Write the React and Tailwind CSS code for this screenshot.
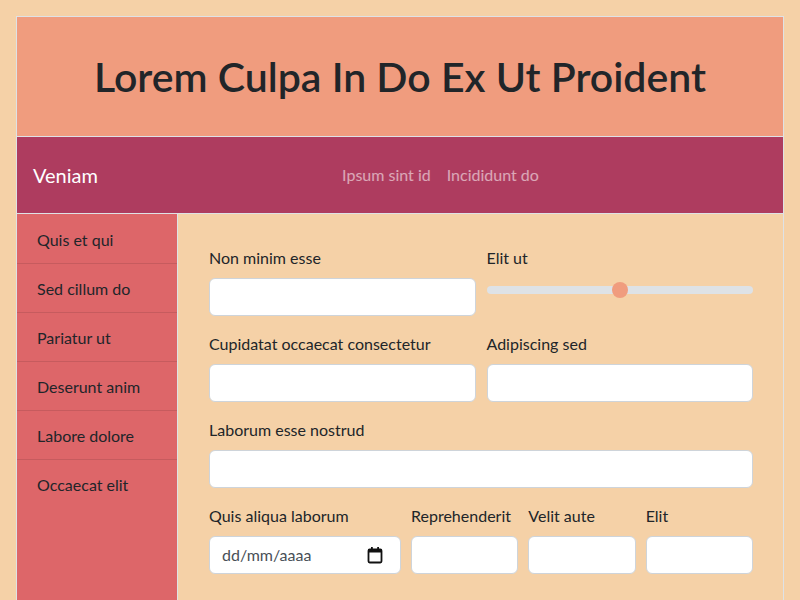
import React from "react";

const sideItems = [
  "Quis et qui",
  "Sed cillum do",
  "Pariatur ut",
  "Deserunt anim",
  "Labore dolore",
  "Occaecat elit",
];

const Field = ({ label, className = "" }) => (
  <div className={className}>
    <label className="block mb-2 leading-6">{label}</label>
    <input
      type="text"
      className="block w-full h-[38px] bg-white border border-[#ced4da] rounded-md px-3"
    />
  </div>
);

const App = () => {
  return (
    <div
      className="min-h-screen bg-[#f5d1a7] p-4 text-[#212529]"
      style={{ fontFamily: "Lato, 'Open Sans', sans-serif" }}
    >
      <div className="border border-[#dee2e6]">
        {/* Header */}
        <header className="h-[120px] bg-[#f09c7e] border-b border-[#dee2e6] flex items-center justify-center">
          <h1 className="text-[41px] font-semibold leading-tight">
            Lorem Culpa In Do Ex Ut Proident
          </h1>
        </header>

        {/* Nav */}
        <nav className="h-[77px] bg-[#ae3c5f] border-b border-[#dee2e6] flex items-center px-4">
          <span className="text-white text-xl mr-4">Veniam</span>
          <div className="flex-1 flex justify-center gap-4 text-white/55">
            <a>Ipsum sint id</a>
            <a>Incididunt do</a>
          </div>
        </nav>

        {/* Body */}
        <div className="flex">
          <aside className="w-[161px] shrink-0 bg-[#dd6669] border-r border-[#dee2e6] min-h-[420px] pt-px">
            {sideItems.map((item, i) => (
              <div
                key={item}
                className={`h-[49px] flex items-center px-5 pt-px ${
                  i < sideItems.length - 1 ? "border-b border-black/10" : ""
                }`}
              >
                {item}
              </div>
            ))}
          </aside>

          <main className="flex-1 pl-[31px] pr-[30px] pt-8 pb-8">
            <div className="grid grid-cols-2 gap-x-[11px]">
              <Field label="Non minim esse" />
              <div>
                <label className="block mb-2 leading-6">Elit ut</label>
                <div className="h-6 flex items-center">
                  <div className="relative w-full h-2 rounded-full bg-[#dee2e6]">
                    <div className="absolute left-1/2 top-1/2 -translate-x-1/2 -translate-y-1/2 w-4 h-4 rounded-full bg-[#f09c7e]" />
                  </div>
                </div>
              </div>
            </div>

            <div className="grid grid-cols-2 gap-x-[11px] mt-4">
              <Field label="Cupidatat occaecat consectetur" />
              <Field label="Adipiscing sed" />
            </div>

            <Field label="Laborum esse nostrud" className="mt-4" />

            <div className="grid grid-cols-[192px_1fr_1fr_1fr] gap-x-[10px] mt-4">
              <div>
                <label className="block mb-2 leading-6">Quis aliqua laborum</label>
                <div className="h-[38px] bg-white border border-[#ced4da] rounded-md px-3 flex items-center justify-between">
                  <span className="text-[#495057]">dd/mm/aaaa</span>
                  <svg width="16" height="18" viewBox="0 0 16 18" className="mr-[5px]">
                    <rect x="1.5" y="3.5" width="13" height="13" rx="1.2" fill="none" stroke="#111" strokeWidth="1.8" />
                    <rect x="1.5" y="3.5" width="13" height="3" fill="#111" />
                    <rect x="4" y="1" width="1.8" height="3.5" fill="#111" />
                    <rect x="10.2" y="1" width="1.8" height="3.5" fill="#111" />
                  </svg>
                </div>
              </div>
              <Field label="Reprehenderit" />
              <Field label="Velit aute" />
              <Field label="Elit" />
            </div>
          </main>
        </div>
      </div>
    </div>
  );
};

export default App;
